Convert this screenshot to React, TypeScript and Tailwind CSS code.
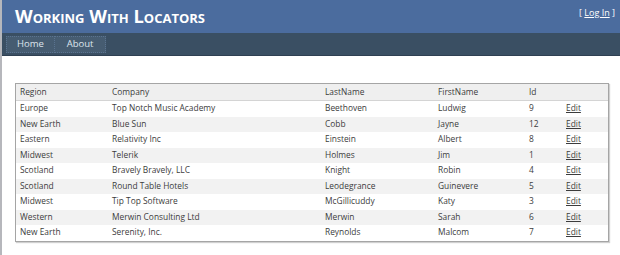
import React from "react";

const rows = [
  ["Europe", "Top Notch Music Academy", "Beethoven", "Ludwig", "9"],
  ["New Earth", "Blue Sun", "Cobb", "Jayne", "12"],
  ["Eastern", "Relativity Inc", "Einstein", "Albert", "8"],
  ["Midwest", "Telerik", "Holmes", "Jim", "1"],
  ["Scotland", "Bravely Bravely, LLC", "Knight", "Robin", "4"],
  ["Scotland", "Round Table Hotels", "Leodegrance", "Guinevere", "5"],
  ["Midwest", "Tip Top Software", "McGillicuddy", "Katy", "3"],
  ["Western", "Merwin Consulting Ltd", "Merwin", "Sarah", "6"],
  ["New Earth", "Serenity, Inc.", "Reynolds", "Malcom", "7"],
];

const cols = "grid grid-cols-[92px_213px_113px_91px_37px_1fr]";

export default function App() {
  return (
    <div className="w-[620px] h-[255px] bg-[#b6b7bc] pl-[2px] overflow-hidden" style={{ fontFamily: '"Open Sans", "Noto Sans", sans-serif' }}>
      <div className="bg-white h-full">
        <div className="h-[33px] bg-[#4b6c9e] flex items-start justify-between">
          <div className="pl-[13px] pt-[4px] text-white font-bold text-[18.3px] leading-[23px] [font-variant:small-caps]">
            Working With Locators
          </div>
          <div className="pr-[5px] pt-[7px] text-[9px] leading-[12px] text-white">
            [ <span className="underline">Log In</span> ]
          </div>
        </div>
        <div className="h-[23px] bg-[#3a4f63] pl-[4px] pt-[3px] flex border-b border-[#2f4052]">
          <div className="w-[49px] h-[17px] bg-[#465c71] border border-dotted border-[#5a7390] flex items-center justify-center text-[9.5px] text-[#dde4ec]">
            Home
          </div>
          <div className="w-[51px] h-[17px] bg-[#465c71] border border-dotted border-l-0 border-[#5a7390] flex items-center justify-center text-[9.5px] text-[#dde4ec]">
            About
          </div>
        </div>
        <div className="pt-[27px] pl-[13px]">
          <div className="w-[594px] border border-[#a5a5a5] shadow-[1px_1px_1px_#d0d0d0] text-[8.4px] text-[#3c3c3c]">
            <div className={`${cols} h-[17px] items-center bg-[#efefef] border-b border-[#d4d4d4]`}>
              <div className="pl-[4px]">Region</div>
              <div className="pl-[4px]">Company</div>
              <div className="pl-[4px]">LastName</div>
              <div className="pl-[4px]">FirstName</div>
              <div className="pl-[4px]">Id</div>
              <div></div>
            </div>
            {rows.map((r, i) => (
              <div key={i} className={`${cols} h-[15.5px] items-center ${i % 2 === 1 ? "bg-[#f2f2f2]" : "bg-white"}`}>
                {r.map((c, j) => (
                  <div key={j} className="pl-[4px] whitespace-nowrap">{c}</div>
                ))}
                <div className="pl-[4px] underline">Edit</div>
              </div>
            ))}
          </div>
        </div>
      </div>
    </div>
  );
}
